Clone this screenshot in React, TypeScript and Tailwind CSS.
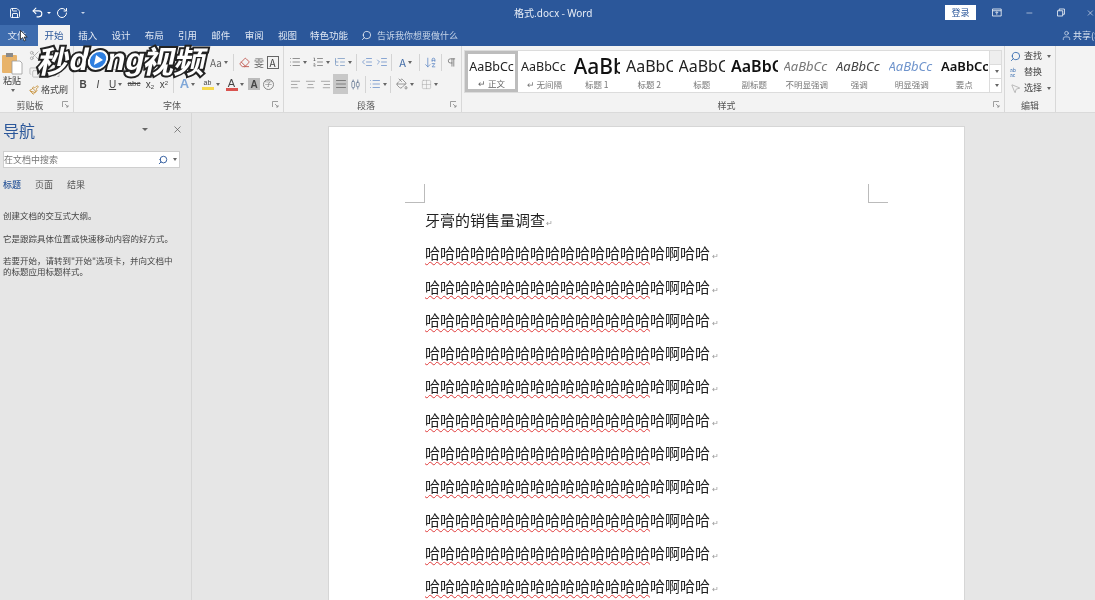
import React from "react";
import {
  Save, Undo2, RotateCw, Search, Scissors, Copy, Paintbrush, X, Minus, User,
  List, ListOrdered, ListTree, IndentDecrease, IndentIncrease, ArrowDownAZ, AlignLeft, AlignCenter,
  AlignRight, AlignJustify, AlignHorizontalDistributeCenter, PaintBucket, Grid2x2, Eraser, Pilcrow, MousePointer2,
} from "lucide-react";

const CJK = "font-['Noto_Sans_CJK_SC','Noto_Sans',sans-serif]";
const tabs = ["插入", "设计", "布局", "引用", "邮件", "审阅", "视图"];

function Caret() {
  return <span className="ml-[2px] inline-block h-0 w-0 border-x-[2px] border-t-[3px] border-x-transparent border-t-[#666]" />;
}

function Launcher() {
  return (
    <svg width="7" height="7" viewBox="0 0 7 7" className="absolute right-[4px] bottom-[4px]">
      <path d="M0.5 6V0.5H6M3 3l3 3M6 4v2H4" fill="none" stroke="#888" strokeWidth="0.8" />
    </svg>
  );
}

function Group({ w, label, launcher = true, children }: { w: string; label: string; launcher?: boolean; children: React.ReactNode }) {
  return (
    <div className={`relative flex h-full shrink-0 flex-col border-r border-[#d8d8d8] ${w}`}>
      <div className="min-h-0 flex-1">{children}</div>
      <div className={`h-[13px] text-center text-[9px] leading-[13px] text-[#555] ${launcher ? "pr-[13px]" : ""}`}>{label}</div>
      {launcher && <Launcher />}
    </div>
  );
}

function Cell({ w, caret, active, children }: { w: string; caret?: boolean; active?: boolean; children: React.ReactNode }) {
  return (
    <div className={`flex h-[20px] shrink-0 items-center justify-center ${w} ${active ? "bg-[#c8c8c8]" : ""}`}>
      {children}
      {caret && <Caret />}
    </div>
  );
}

function Sep() {
  return <div className="mx-[2px] h-[17px] w-px shrink-0 bg-[#d4d4d4]" />;
}

const ic = "text-[#666]";

function Paragraphs() {
  const row = "哈哈哈哈哈哈哈哈哈哈哈哈哈哈哈";
  return (
    <>
      {Array.from({ length: 11 }).map((_, i) => (
        <div key={i} className="h-[33.3px] whitespace-nowrap text-[15px] leading-[33.3px] text-[#222]">
          <span className="underline decoration-[#e03a3a] decoration-wavy decoration-[0.7px] underline-offset-[2px]">{row}</span>
          哈啊哈哈<span className="ml-[2px] text-[8px] text-[#999]">↵</span>
        </div>
      ))}
    </>
  );
}

const styles: { name: string; cls: string; text: string }[] = [
  { name: "无间隔", cls: "text-[12.5px] text-[#222]", text: "AaBbCc" },
  { name: "标题 1", cls: "text-[21px] font-medium text-[#111]", text: "AaBbCc" },
  { name: "标题 2", cls: "text-[16px] text-[#222]", text: "AaBbCc" },
  { name: "标题", cls: "text-[16px] text-[#222]", text: "AaBbCc" },
  { name: "副标题", cls: "text-[16px] font-semibold text-[#111]", text: "AaBbCc" },
  { name: "不明显强调", cls: "text-[13px] italic text-[#777]", text: "AaBbCc" },
  { name: "强调", cls: "text-[13px] italic text-[#444]", text: "AaBbCc" },
  { name: "明显强调", cls: "text-[13px] italic text-[#6f94cc]", text: "AaBbCc" },
  { name: "要点", cls: "text-[13px] font-semibold text-[#111]", text: "AaBbCc" },
];

export default function App() {
  return (
    <div className={`relative h-[600px] w-[1095px] overflow-hidden bg-[#e6e6e6] blur-[0.4px] ${CJK}`}>
      {/* title bar */}
      <div className="flex h-[25px] items-center bg-[#2b579a] text-white">
        <div className="flex w-[95px] items-center pl-[9px]">
          <Save size={12} strokeWidth={1.8} />
          <Undo2 size={13} strokeWidth={2} className="ml-[10px]" />
          <span className="ml-[3px] h-0 w-0 border-x-[2px] border-t-[2px] border-x-transparent border-t-white" />
          <RotateCw size={12} strokeWidth={2} className="ml-[5px]" />
          <span className="ml-[13px] h-0 w-0 border-x-[2px] border-t-[2px] border-x-transparent border-t-[#c9d6ea]" />
        </div>
        <div className="flex-1 pl-[419px] text-[10px] text-[#e8eef7]">
          格式.docx - <span className="font-['Noto_Sans',sans-serif]">Word</span>
        </div>
        <div className="flex h-[15px] w-[31px] items-center justify-center bg-white text-[9px] text-[#2b579a]">登录</div>
        <div className="flex w-[119px] items-center pl-[16px]">
          <svg width="11" height="9" viewBox="0 0 11 9">
            <path d="M.5.5h10v8H.5zM.5 2.5h10M5.5 7V4M4 5l1.500-1.500L7 5" fill="none" stroke="#fff" strokeWidth="0.9" />
          </svg>
          <Minus size={10} strokeWidth={1.5} className="ml-[23px]" />
          <svg width="9" height="9" viewBox="0 0 9 9" className="ml-[24px]">
            <path d="M.5 2.500h6v6h-6zM2.500 2.500v-2h6v6h-2" fill="none" stroke="#fff" strokeWidth="0.9" />
          </svg>
          <X size={10} strokeWidth={1.5} className="ml-[21px]" />
        </div>
      </div>

      {/* tabs */}
      <div className="flex h-[21px] items-stretch bg-[#2b579a] text-[9.5px] text-[#dfe7f3]">
        <div className="flex w-[38px] items-center justify-center bg-[#3e6cae] pr-[4px]">文件</div>
        <div className="flex w-[32px] items-center justify-center bg-[#f3f3f3] text-[#2b579a]">开始</div>
        <div className="w-[1px]" />
        {tabs.map((t) => (
          <div key={t} className="flex w-[33.300px] items-center justify-center">{t}</div>
        ))}
        <div className="flex w-[50px] items-center justify-center whitespace-nowrap">特色功能</div>
        <div className="ml-[7px] flex items-center gap-[5px] text-[#c6d4e8]">
          <Search size={11} strokeWidth={1.6} className="-scale-x-100 text-white" />
          <span className="text-[9px]">告诉我你想要做什么</span>
        </div>
        <div className="ml-auto flex w-[34px] items-center gap-[1px] whitespace-nowrap">
          <User size={11} strokeWidth={1.5} className="shrink-0" />
          <span className="text-[9px]">共享(S)</span>
        </div>
      </div>

      {/* ribbon */}
      <div className="flex h-[67px] items-stretch border-b border-[#dadada] bg-[#f3f3f3] text-[#444]">
        <Group w="w-[74px]" label="剪贴板">
          <div className="flex h-[53px]">
            <div className="flex w-[24px] shrink-0 flex-col items-center pt-[6px]">
              <svg width="22" height="23" viewBox="0 0 22 23" className="shrink-0">
                <rect x="1" y="3" width="15" height="18" rx="1" fill="#e8b36a" />
                <rect x="5" y="1" width="7" height="4" fill="#8a8a8a" />
                <path d="M11 9h8l2 2v11H11z" fill="#fff" stroke="#999" strokeWidth="0.8" />
              </svg>
              <span className="text-[9px] leading-[11px]">粘贴</span>
              <span className="mt-[3px] flex"><Caret /></span>
            </div>
            <div className="flex flex-col pt-[1px] pl-[5px] text-[9px] text-[#aaa]">
              <div className="flex h-[17px] items-center"><Scissors size={11} className="text-[#aaa]" /></div>
              <div className="flex h-[17px] items-center gap-[2px]"><Copy size={11} className="text-[#bbb]" />复制</div>
              <div className="flex h-[17px] items-center gap-[2px] whitespace-nowrap text-[#444]">
                <Paintbrush size={10} className="text-[#c48a2c]" />格式刷
              </div>
            </div>
          </div>
        </Group>

        <Group w="w-[210px]" label="字体">
          <div className="flex h-[27px] items-center pt-[5px] pl-[4px]">
            <div className="h-[15px] w-[92px] border border-[#ccc] bg-white" />
            <div className="ml-[2px] h-[15px] w-[32px] border border-[#ccc] bg-white" />
            <Cell w="w-[24px] ml-[3px]" caret><span className="text-[10px] text-[#666]">Aa</span></Cell>
            <Sep />
            <Cell w="w-[16px]"><Eraser size={11} className="text-[#c0564f]" /></Cell>
            <Cell w="w-[14px]"><span className="text-[10px] text-[#666]">雯</span></Cell>
            <Cell w="w-[13px]"><span className="flex h-[13px] w-[12px] items-center justify-center border border-[#666] text-[10px] text-[#444]">A</span></Cell>
          </div>
          <div className="flex h-[22px] items-center pl-[2px] font-['Liberation_Sans',sans-serif] text-[10px] text-[#444]">
            <Cell w="w-[14px]"><b>B</b></Cell>
            <Cell w="w-[16px]"><i>I</i></Cell>
            <Cell w="w-[19px]" caret><u>U</u></Cell>
            <Cell w="w-[18px]"><span className="text-[8px] line-through">abc</span></Cell>
            <Cell w="w-[14px]"><span>x<sub className="text-[6px]">2</sub></span></Cell>
            <Cell w="w-[14px]"><span>x<sup className="text-[6px]">2</sup></span></Cell>
            <Sep />
            <Cell w="w-[23px]" caret><span className="text-[13px] font-bold text-[#7fa7d8]">A</span></Cell>
            <Cell w="w-[23px]" caret>
              <span className="flex flex-col items-center text-[7px] leading-[8px]">ab<span className="h-[3px] w-[12px] bg-[#f7d94c]" /></span>
            </Cell>
            <Cell w="w-[25px]" caret>
              <span className="flex flex-col items-center text-[11px] leading-[10px]">A<span className="h-[3px] w-[12px] bg-[#d9534f]" /></span>
            </Cell>
            <Cell w="w-[14px]"><span className="flex h-[12px] w-[12px] items-center justify-center bg-[#bbb] text-[10px] font-bold">A</span></Cell>
            <Cell w="w-[14px]"><span className="flex h-[11px] w-[11px] items-center justify-center rounded-full border border-[#888] text-[7px] text-[#777]">字</span></Cell>
          </div>
        </Group>

        <Group w="w-[178px]" label="段落">
          <div className="flex h-[27px] items-center pt-[5px] pl-[2px]">
            <Cell w="w-[23px]" caret><List size={12} strokeWidth={1.4} className={ic} /></Cell>
            <Cell w="w-[23px]" caret><ListOrdered size={12} strokeWidth={1.4} className={ic} /></Cell>
            <Cell w="w-[22px]" caret><ListTree size={12} strokeWidth={1.4} className="text-[#6d8fbd]" /></Cell>
            <Sep />
            <Cell w="w-[15px]"><IndentDecrease size={12} strokeWidth={1.4} className="text-[#5b85c4]" /></Cell>
            <Cell w="w-[15px]"><IndentIncrease size={12} strokeWidth={1.4} className="text-[#5b85c4]" /></Cell>
            <Sep />
            <Cell w="w-[23px]" caret><span className="text-[11px] text-[#466fa8]">A</span></Cell>
            <Sep />
            <Cell w="w-[17px]"><ArrowDownAZ size={13} strokeWidth={1.4} className="text-[#5b85c4]" /></Cell>
            <Sep />
            <Cell w="w-[14px]"><Pilcrow size={11} strokeWidth={1.6} className={ic} /></Cell>
          </div>
          <div className="flex h-[22px] items-center pl-[4px]">
            <Cell w="w-[15px]"><AlignLeft size={11} strokeWidth={1.5} className="text-[#888]" /></Cell>
            <Cell w="w-[15px]"><AlignCenter size={11} strokeWidth={1.5} className="text-[#888]" /></Cell>
            <Cell w="w-[15px]"><AlignRight size={11} strokeWidth={1.5} className="text-[#888]" /></Cell>
            <Cell w="w-[15px]" active><AlignJustify size={12} strokeWidth={1.5} className={ic} /></Cell>
            <Cell w="w-[15px]"><AlignHorizontalDistributeCenter size={11} strokeWidth={1.5} className="text-[#5b6f8c]" /></Cell>
            <Sep />
            <Cell w="w-[20px]" caret><List size={12} strokeWidth={1.4} className="text-[#5b85c4]" /></Cell>
            <Sep />
            <Cell w="w-[24px]" caret><PaintBucket size={12} strokeWidth={1.3} className={ic} /></Cell>
            <Cell w="w-[24px]" caret><Grid2x2 size={11} strokeWidth={1.2} className="text-[#aaa]" /></Cell>
          </div>
        </Group>

        <Group w="w-[543px]" label="样式">
          <div className="flex h-[47px] pt-[4px] pl-[2px]">
            <div className="flex h-[43px] w-[526px] border border-[#dcdcdc] bg-white font-['Noto_Sans',sans-serif]">
              <div className="flex h-full w-[53px] shrink-0 flex-col items-center overflow-hidden border-[3px] border-[#bdbdbd]">
                <div className="h-[25px] w-full overflow-hidden whitespace-nowrap text-center text-[12.5px] leading-[25px] text-[#222]">AaBbCc</div>
                <div className={`text-[8.5px] leading-[11px] text-[#666] ${CJK}`}>↵ 正文</div>
              </div>
              {styles.map((s) => (
                <div key={s.name} className="flex h-full w-[52.500px] shrink-0 flex-col items-center overflow-hidden px-[3px] pt-[3px]">
                  <div className={`h-[25px] w-full overflow-hidden whitespace-nowrap leading-[25px] ${s.cls}`}>{s.text}</div>
                  <div className={`whitespace-nowrap text-[8.5px] leading-[11px] text-[#777] ${CJK}`}>
                    {s.name === "无间隔" ? "↵ " : ""}{s.name}
                  </div>
                </div>
              ))}
            </div>
            <div className="flex h-[43px] w-[12px] flex-col border border-l-0 border-[#dcdcdc] bg-white">
              <div className="h-[14px] border-b border-[#dcdcdc] bg-[#eee]" />
              <div className="flex h-[14px] items-center justify-center border-b border-[#dcdcdc]"><Caret /></div>
              <div className="flex flex-1 items-center justify-center"><Caret /></div>
            </div>
          </div>
        </Group>

        <Group w="w-[51px]" label="编辑" launcher={false}>
          <div className="flex flex-col pt-[2px] pl-[5px] text-[9px] text-[#444]">
            <div className="flex h-[16px] items-center gap-[3px] whitespace-nowrap">
              <Search size={11} strokeWidth={2} className="-scale-x-100 text-[#3a6eb0]" />查找<Caret />
            </div>
            <div className="flex h-[16px] items-center gap-[3px] whitespace-nowrap">
              <span className="flex h-[11px] w-[11px] flex-col text-[5px] leading-[5.5px] text-[#3a6eb0]"><span>ab</span><span>ac</span></span>替换
            </div>
            <div className="flex h-[16px] items-center gap-[3px] whitespace-nowrap">
              <MousePointer2 size={11} strokeWidth={1} className="text-[#777]" />选择<Caret />
            </div>
          </div>
        </Group>
      </div>

      {/* main */}
      <div className="flex h-[487px]">
        <aside className="h-full w-[192px] shrink-0 border-r border-[#d6d6d6] bg-[#e6e6e6] px-[3px]">
          <div className="flex h-[38px] items-center pb-[5px]">
            <span className="text-[16px] text-[#2b579a]">导航</span>
            <span className="ml-[107px] h-0 w-0 border-x-[3px] border-t-[3px] border-x-transparent border-t-[#666]" />
            <X size={11} strokeWidth={1.5} className="ml-[24px] text-[#555]" />
          </div>
          <div className="flex h-[17px] w-[177px] items-center border border-[#cfcfcf] bg-white text-[9px] text-[#777]">
            在文档中搜索
            <Search size={10} strokeWidth={2.2} className="ml-auto -scale-x-100 text-[#2b579a]" />
            <span className="mr-[2px] ml-[3px] flex"><Caret /></span>
          </div>
          <div className="mt-[10px] flex gap-[14px] text-[9px] leading-[14px] text-[#555]">
            <span className="font-medium text-[#2b579a]">标题</span>
            <span>页面</span>
            <span>结果</span>
          </div>
          <div className="mt-[18px] w-[176px] text-[8.500px] leading-[11px] text-[#444]">
            <p>创建文档的交互式大纲。</p>
            <p className="mt-[12px] whitespace-nowrap">它是跟踪具体位置或快速移动内容的好方式。</p>
            <p className="mt-[11px]">若要开始，请转到"开始"选项卡，并向文档中的标题应用标题样式。</p>
          </div>
        </aside>
        <main className="min-w-0 flex-1 pt-[13px] pl-[136px]">
          <div className="h-[600px] w-[637px] border border-[#d6d6d6] bg-white px-[76px] pt-[57px]">
            <div className="flex justify-between">
              <div className="h-[19px] w-[20px] border-r border-b border-[#bbb]" />
              <div className="h-[19px] w-[20px] border-b border-l border-[#bbb]" />
            </div>
            <div className="pl-[20px]">
              <div className="h-[33.300px] whitespace-nowrap text-[15px] leading-[33.300px] text-[#222]">
                牙膏的销售量调查<span className="ml-[1px] text-[8px] text-[#999]">↵</span>
              </div>
              <Paragraphs />
            </div>
          </div>
        </main>
      </div>

      {/* video watermark overlay */}
      <div className="absolute top-[40px] left-[39px] flex h-[40px] -skew-x-12 items-center whitespace-nowrap text-[31px] leading-[40px] font-bold text-white [-webkit-text-stroke:4px_#222] [paint-order:stroke_fill]">
        <span>秒</span>
        <span className="font-['Liberation_Sans',sans-serif]">d</span>
        <span className="relative z-10 -mx-[1px] flex h-[20px] w-[20px] items-center justify-center rounded-full border-[2px] border-white bg-[#2f7fe0] outline-[2px] outline-[#222]">
          <span className="ml-[2px] h-0 w-0 border-y-[5px] border-l-[8px] border-y-transparent border-l-white" />
        </span>
        <span className="font-['Liberation_Sans',sans-serif]">ng</span>
        <span>视频</span>
      </div>

      {/* cursor */}
      <svg width="8" height="12" viewBox="0 0 8 12" className="absolute top-[30px] left-[20px]">
        <path d="M.5.500v9l2.200-2 1.500 3.500 1.500-.7-1.500-3.300h3z" fill="#fff" stroke="#111" strokeWidth="0.7" />
      </svg>
    </div>
  );
}
